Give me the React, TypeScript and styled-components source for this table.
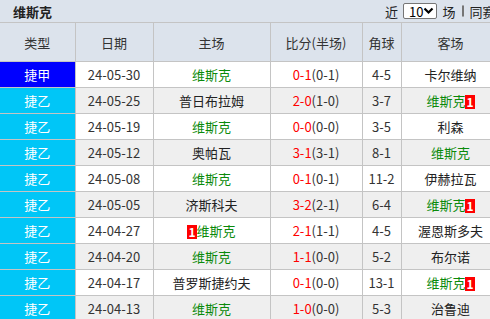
import styled, { createGlobalStyle } from 'styled-components';

const GlobalStyle = createGlobalStyle`
  body {
    margin: 0;
    overflow: hidden;
    background: #fff;
    font-family: "Noto Sans CJK SC", "Noto Sans", sans-serif;
  }
`;

type Match = {
  league: 'A' | 'B';
  date: string;
  home: string;
  homeOurs?: boolean;
  homeBadge?: boolean;
  score: string;
  half: string;
  corner: string;
  away: string;
  awayOurs?: boolean;
  awayBadge?: boolean;
};

const matches: Match[] = [
  { league: 'A', date: '24-05-30', home: '维斯克', homeOurs: true, score: '0-1', half: '(0-1)', corner: '4-5', away: '卡尔维纳' },
  { league: 'B', date: '24-05-25', home: '普日布拉姆', score: '2-0', half: '(1-0)', corner: '3-7', away: '维斯克', awayOurs: true, awayBadge: true },
  { league: 'B', date: '24-05-19', home: '维斯克', homeOurs: true, score: '0-0', half: '(0-0)', corner: '3-5', away: '利森' },
  { league: 'B', date: '24-05-12', home: '奥帕瓦', score: '3-1', half: '(3-1)', corner: '8-1', away: '维斯克', awayOurs: true },
  { league: 'B', date: '24-05-08', home: '维斯克', homeOurs: true, score: '0-1', half: '(0-1)', corner: '11-2', away: '伊赫拉瓦' },
  { league: 'B', date: '24-05-05', home: '济斯科夫', score: '3-2', half: '(2-1)', corner: '6-4', away: '维斯克', awayOurs: true, awayBadge: true },
  { league: 'B', date: '24-04-27', home: '维斯克', homeOurs: true, homeBadge: true, score: '2-1', half: '(1-1)', corner: '4-5', away: '渥恩斯多夫' },
  { league: 'B', date: '24-04-20', home: '维斯克', homeOurs: true, score: '1-1', half: '(0-0)', corner: '5-2', away: '布尔诺' },
  { league: 'B', date: '24-04-17', home: '普罗斯捷约夫', score: '0-1', half: '(0-0)', corner: '13-1', away: '维斯克', awayOurs: true, awayBadge: true },
  { league: 'B', date: '24-04-13', home: '维斯克', homeOurs: true, score: '1-0', half: '(0-0)', corner: '5-3', away: '治鲁迪' },
];

export default function App() {
  return (
    <Page>
      <GlobalStyle />
      <TitleBar>
        <Title>维斯克</Title>
        <Controls>
          <span>近</span>
          <CountSelect>
            <span>10</span>
            <svg width="11" height="8" viewBox="0 0 11 8">
              <path d="M1.5 1.5 L5.5 5.5 L9.5 1.5" fill="none" stroke="#000" strokeWidth="2.2" />
            </svg>
          </CountSelect>
          <span>场</span>
          <CheckBox />
          <span>同赛事</span>
        </Controls>
      </TitleBar>
      <Table>
        <colgroup>
          <col style={{ width: 75 }} />
          <col style={{ width: 78 }} />
          <col style={{ width: 117 }} />
          <col style={{ width: 92 }} />
          <col style={{ width: 39 }} />
          <col style={{ width: 99 }} />
        </colgroup>
        <thead>
          <tr>
            <HeadCell>类型</HeadCell>
            <HeadCell>日期</HeadCell>
            <HeadCell>主场</HeadCell>
            <HeadCell>比分(半场)</HeadCell>
            <HeadCell>角球</HeadCell>
            <HeadCell>客场</HeadCell>
          </tr>
        </thead>
        <tbody>
          {matches.map((m, i) => (
            <Row key={m.date} $alt={i % 2 === 1}>
              <TypeCell $league={m.league}>{m.league === 'A' ? '捷甲' : '捷乙'}</TypeCell>
              <Cell>{m.date}</Cell>
              <Cell>
                {m.homeBadge && <Badge>1</Badge>}
                <Team $ours={m.homeOurs}>{m.home}</Team>
              </Cell>
              <Cell>
                <Score>{m.score}</Score>
                {m.half}
              </Cell>
              <Cell>{m.corner}</Cell>
              <Cell>
                <Team $ours={m.awayOurs}>{m.away}</Team>
                {m.awayBadge && <Badge>1</Badge>}
              </Cell>
            </Row>
          ))}
        </tbody>
      </Table>
    </Page>
  );
}

const Page = styled.div`
  width: 500px;
  color: #333;
  font-size: 13px;
`;

const TitleBar = styled.div`
  height: 22px;
  background: #dce3ec;
  display: flex;
  align-items: center;
  justify-content: space-between;
  padding-left: 13px;
`;

const Title = styled.h3`
  margin: 0;
  font-size: 13px;
  font-weight: bold;
  color: #222;
`;

const Controls = styled.div`
  display: flex;
  align-items: center;
  gap: 3px;
  width: 115px;
  font-size: 13px;
  color: #222;
  white-space: nowrap;
  overflow: visible;
`;

const CountSelect = styled.div`
  box-sizing: border-box;
  width: 35px;
  height: 16px;
  border: 1px solid #767676;
  border-radius: 2px;
  background: #fff;
  display: flex;
  align-items: center;
  justify-content: space-between;
  padding: 0 2px 0 5px;
  font-size: 13px;
  color: #000;
  margin: 0 2px;
`;

const CheckBox = styled.span`
  box-sizing: border-box;
  width: 12px;
  height: 12px;
  border: 1px solid #767676;
  border-radius: 2px;
  background: #fff;
  margin: 0 2px 0 4px;
`;

const Table = styled.table`
  width: 500px;
  table-layout: fixed;
  border-collapse: collapse;
  font-size: 13px;
`;

const HeadCell = styled.th`
  height: 38px;
  padding: 0;
  background: #dce3ec;
  border: 1px solid #c4c4c4;
  font-weight: normal;
  color: #333;
  text-align: center;
  &:first-child {
    border-left: none;
  }
`;

const Row = styled.tr<{ $alt: boolean }>`
  background: ${(p) => (p.$alt ? '#efefef' : '#fff')};
`;

const Cell = styled.td`
  height: 25px;
  padding: 0;
  border: 1px solid #c4c4c4;
  text-align: center;
  white-space: nowrap;
  color: #333;
`;

const TypeCell = styled(Cell)<{ $league: 'A' | 'B' }>`
  border-left: none;
  background: ${(p) => (p.$league === 'A' ? '#0000ff' : '#00c6f7')};
  color: #fff;
`;

const Team = styled.span<{ $ours?: boolean }>`
  color: ${(p) => (p.$ours ? '#0a8a0a' : '#222')};
`;

const Badge = styled.span`
  display: inline-block;
  background: #f00;
  color: #fff;
  font-weight: bold;
  font-size: 12px;
  line-height: 14px;
  padding: 0 1px;
  vertical-align: middle;
`;

const Score = styled.span`
  color: #f00;
`;
